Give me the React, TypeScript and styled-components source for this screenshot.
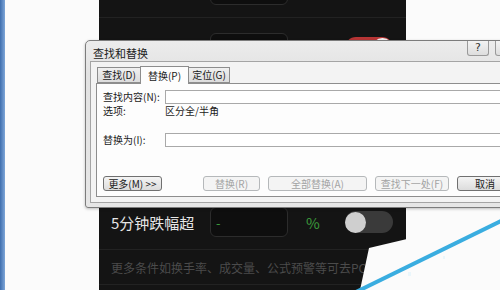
import React from 'react'
import styled, { createGlobalStyle } from 'styled-components'

const GlobalStyle = createGlobalStyle`
  html, body {
    margin: 0;
    padding: 0;
    width: 500px;
    height: 290px;
    overflow: hidden;
    background: #fbfbfb;
  }
`

const Screen = styled.div`
  position: relative;
  width: 500px;
  height: 290px;
  overflow: hidden;
  display: flex;
  background: #fbfbfb;
  font-family: 'Noto Sans CJK SC', 'Noto Sans', sans-serif;
`

const BlueStrip = styled.div`
  width: 5px;
  flex-shrink: 0;
  background: linear-gradient(90deg, #3f6eae, #7ea6d8);
`

const Spacer = styled.div<{ w: number }>`
  width: ${({ w }) => w}px;
  flex-shrink: 0;
`

const Phone = styled.div`
  width: 307px;
  flex-shrink: 0;
  background: #141414;
  overflow: hidden;
`

const PhoneInner = styled.div`
  margin-top: -40px;
  display: flex;
  flex-direction: column;
`

const SettingRow = styled.div`
  height: 58px;
  box-sizing: border-box;
  border-bottom: 1px solid #222;
  display: flex;
  align-items: center;
  padding-left: 12px;
  padding-top: 3px;
`

const RowLabel = styled.div`
  width: 99px;
  color: #e6e6e6;
  font-size: 15px;
  white-space: nowrap;
`

const ValueBox = styled.div`
  width: 78px;
  height: 30px;
  box-sizing: border-box;
  border: 1px solid #2c2c2c;
  border-radius: 6px;
  background: #0e0e0e;
  color: #3b9a3b;
  font-size: 13px;
  display: flex;
  align-items: center;
  padding-left: 5px;
`

const Unit = styled.div`
  margin-left: 18px;
  width: 39px;
  color: #3b9a3b;
  font-size: 15px;
`

const Toggle = styled.div<{ on?: boolean }>`
  width: 48px;
  height: 22px;
  border-radius: 11px;
  background: ${({ on }) => (on ? '#b83535' : '#3a3a3a')};
  display: flex;
  align-items: center;
  justify-content: ${({ on }) => (on ? 'flex-end' : 'flex-start')};
`

const Knob = styled.div<{ on?: boolean }>`
  width: 21px;
  height: 21px;
  border-radius: 50%;
  background: ${({ on }) => (on ? '#f4f4f4' : '#cfcfcf')};
`

const HintRow = styled.div`
  height: 35px;
  box-sizing: border-box;
  border-bottom: 1px solid #222;
  display: flex;
  align-items: center;
  padding-left: 12px;
  color: #4b4b4b;
  font-size: 12px;
  white-space: nowrap;
`

const Overlay = styled.svg`
  position: absolute;
  left: 0;
  top: 0;
  pointer-events: none;
`

const Dialog = styled.div`
  position: absolute;
  left: 85px;
  top: 40px;
  width: 453px;
  height: 168px;
  box-sizing: border-box;
  border: 1px solid #7c7c7c;
  border-radius: 5px 5px 3px 3px;
  background: linear-gradient(180deg, #ececec, #e2e2e2 20%, #e6e6e6);
  box-shadow: 0 1px 3px rgba(0, 0, 0, 0.25);
  padding: 0 4px 4px 4px;
  display: flex;
  flex-direction: column;
  font-size: 10px;
  line-height: 14px;
  color: #1a1a1a;
`

const TitleBar = styled.div`
  height: 21px;
  display: flex;
  align-items: flex-start;
`

const Title = styled.div`
  padding: 5px 0 0 3px;
  font-size: 11px;
  color: #222;
`

const CaptionGroup = styled.div`
  margin-left: auto;
  display: flex;
  gap: 6px;
`

const CaptionButton = styled.div<{ w: number }>`
  width: ${({ w }) => w}px;
  height: 15px;
  box-sizing: border-box;
  border: 1px solid #9a9a9a;
  border-top: none;
  border-radius: 0 0 3px 3px;
  background: linear-gradient(180deg, #f3f3f3, #dedede);
  display: flex;
  align-items: center;
  justify-content: center;
  font-size: 11px;
  color: #333;
  font-family: 'DejaVu Sans', sans-serif;
`

const Client = styled.div`
  flex: 1;
  box-sizing: border-box;
  border: 1px solid #a4a4a4;
  background: #f3f3f3;
  padding: 4px 0 5px 5px;
  display: flex;
  flex-direction: column;
`

const TabStrip = styled.div`
  display: flex;
  align-items: flex-end;
  height: 17px;
  padding-left: 1px;
  position: relative;
  z-index: 1;
`

const Tab = styled.div<{ active?: boolean; w: number }>`
  width: ${({ w }) => w}px;
  height: ${({ active }) => (active ? 18 : 16)}px;
  margin-bottom: ${({ active }) => (active ? -1 : 0)}px;
  box-sizing: border-box;
  border: 1px solid #8d8d8d;
  border-bottom: ${({ active }) => (active ? 'none' : '1px solid #8d8d8d')};
  margin-left: -1px;
  background: ${({ active }) =>
    active ? '#fdfdfd' : 'linear-gradient(180deg, #f0f0f0, #dcdcdc)'};
  display: flex;
  align-items: center;
  justify-content: center;
  white-space: nowrap;
  &:first-child {
    margin-left: 0;
  }
`

const Panel = styled.div`
  flex: 1;
  box-sizing: border-box;
  border: 1px solid #8d8d8d;
  background: #fdfdfd;
  padding: 6px 0 5px 6px;
  display: flex;
  flex-direction: column;
`

const FieldRow = styled.div<{ top?: number }>`
  display: flex;
  align-items: center;
  margin-top: ${({ top }) => top || 0}px;
  height: 14px;
`

const FieldLabel = styled.div`
  width: 62px;
  white-space: nowrap;
`

const TextInput = styled.div`
  flex: 1;
  height: 14px;
  box-sizing: border-box;
  border: 1px solid #a9a9a9;
  background: #fff;
`

const ButtonRow = styled.div`
  display: flex;
  gap: 8px;
  margin-top: 29px;
`

const Button = styled.div<{ w: number; disabled?: boolean; push?: number }>`
  width: ${({ w }) => w}px;
  flex-shrink: 0;
  height: 15px;
  box-sizing: border-box;
  margin-left: ${({ push }) => push || 0}px;
  border: 1px solid ${({ disabled }) => (disabled ? '#b5b8ba' : '#707070')};
  border-radius: 3px;
  background: ${({ disabled }) =>
    disabled ? '#f4f4f4' : 'linear-gradient(180deg, #f4f4f4, #dcdcdc)'};
  color: ${({ disabled }) => (disabled ? '#a3a3a3' : '#1a1a1a')};
  display: flex;
  align-items: center;
  justify-content: center;
  white-space: nowrap;
`

export default function App() {
  return (
    <Screen>
      <GlobalStyle />
      <BlueStrip />
      <Spacer w={94} />
      <Phone>
        {/* rows above the last one sit behind the dialog; only their boxes and the red toggle show */}
        <PhoneInner>
          <SettingRow>
            <RowLabel />
            <ValueBox />
          </SettingRow>
          <SettingRow>
            <RowLabel />
            <ValueBox />
            <Unit />
            <Toggle on>
              <Knob on />
            </Toggle>
          </SettingRow>
          <SettingRow>
            <RowLabel />
            <ValueBox />
          </SettingRow>
          <SettingRow>
            <RowLabel />
            <ValueBox />
          </SettingRow>
          <SettingRow>
            <RowLabel>5分钟跌幅超</RowLabel>
            <ValueBox>-</ValueBox>
            <Unit>%</Unit>
            <Toggle>
              <Knob />
            </Toggle>
          </SettingRow>
          <HintRow>更多条件如换手率、成交量、公式预警等可去PC端设置</HintRow>
        </PhoneInner>
      </Phone>

      <Overlay width={500} height={290} viewBox="0 0 500 290">
        <polygon points="407,239 369,248 360,290 500,290 500,239" fill="#fbfbfb" />
        <line x1={356} y1={292} x2={503} y2={220} stroke="#3aade0" strokeWidth={4} />
        <rect x={408} y={272} width={3} height={4} fill="#eaf6fb" />
        <rect x={443} y={256} width={2} height={3} fill="#eaf6fb" />
      </Overlay>

      <Dialog>
        <TitleBar>
          <Title>查找和替换</Title>
          <CaptionGroup>
            <CaptionButton w={22}>?</CaptionButton>
            <CaptionButton w={38} />
          </CaptionGroup>
        </TitleBar>
        <Client>
          <TabStrip>
            <Tab w={44}>查找(D)</Tab>
            <Tab active w={49}>
              替换(P)
            </Tab>
            <Tab w={42}>定位(G)</Tab>
          </TabStrip>
          <Panel>
            <FieldRow>
              <FieldLabel>查找内容(N):</FieldLabel>
              <TextInput />
            </FieldRow>
            <FieldRow>
              <FieldLabel>选项:</FieldLabel>
              <div>区分全/半角</div>
            </FieldRow>
            <FieldRow top={15}>
              <FieldLabel>替换为(I):</FieldLabel>
              <TextInput />
            </FieldRow>
            <ButtonRow>
              <Button w={59}>更多(M) &gt;&gt;</Button>
              <Button w={57} disabled push={33}>
                替换(R)
              </Button>
              <Button w={99} disabled>
                全部替换(A)
              </Button>
              <Button w={74} disabled>
                查找下一处(F)
              </Button>
              <Button w={56}>取消</Button>
            </ButtonRow>
          </Panel>
        </Client>
      </Dialog>
    </Screen>
  )
}
